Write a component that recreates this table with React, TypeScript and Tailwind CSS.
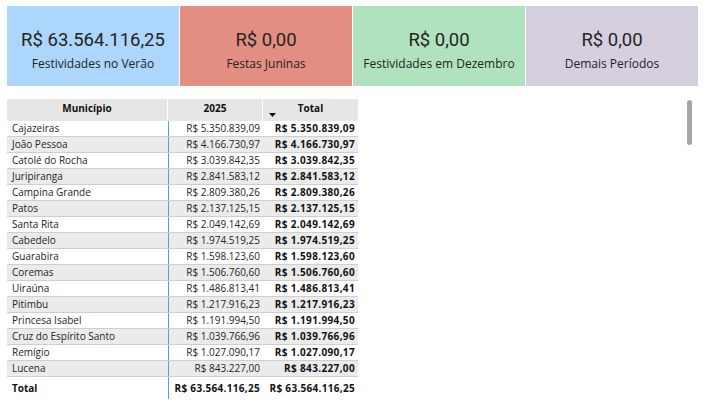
import React from "react";

const cards = [
  { value: "R$ 63.564.116,25", label: "Festividades no Verão", bg: "bg-[#acd6fc]" },
  { value: "R$ 0,00", label: "Festas Juninas", bg: "bg-[#e28e82]" },
  { value: "R$ 0,00", label: "Festividades em Dezembro", bg: "bg-[#b0e2bd]" },
  { value: "R$ 0,00", label: "Demais Períodos", bg: "bg-[#d6cfe0]" },
];

const rows: [string, string][] = [
  ["Cajazeiras", "R$ 5.350.839,09"],
  ["João Pessoa", "R$ 4.166.730,97"],
  ["Catolé do Rocha", "R$ 3.039.842,35"],
  ["Juripiranga", "R$ 2.841.583,12"],
  ["Campina Grande", "R$ 2.809.380,26"],
  ["Patos", "R$ 2.137.125,15"],
  ["Santa Rita", "R$ 2.049.142,69"],
  ["Cabedelo", "R$ 1.974.519,25"],
  ["Guarabira", "R$ 1.598.123,60"],
  ["Coremas", "R$ 1.506.760,60"],
  ["Uiraúna", "R$ 1.486.813,41"],
  ["Pitimbu", "R$ 1.217.916,23"],
  ["Princesa Isabel", "R$ 1.191.994,50"],
  ["Cruz do Espírito Santo", "R$ 1.039.766,96"],
  ["Remígio", "R$ 1.027.090,17"],
  ["Lucena", "R$ 843.227,00"],
];

export default function App() {
  return (
    <div className="w-[709px] h-[413px] bg-white relative overflow-hidden pl-[7px] pt-[6px] text-[#252423]">
      <div className="flex gap-px">
        {cards.map((c, i) => (
          <div
            key={i}
            className={`${c.bg} w-[172px] h-[80px] flex flex-col items-center pt-[23px]`}
          >
            <div className="font-['Roboto'] text-[18.5px] leading-[22px] text-[#252423]">
              {c.value}
            </div>
            <div className="font-['Open_Sans'] text-[12px] leading-[16px] text-[#252423] mt-[5px]">
              {c.label}
            </div>
          </div>
        ))}
      </div>

      <div className="mt-[13px] w-[351px] font-['Open_Sans'] text-[10px] text-[#252423]">
        <div className="grid grid-cols-[161px_95px_95px] h-[22px] bg-[#e6e6e6] font-bold text-[#111]">
          <div className="flex items-center justify-center border-r border-white pb-[3px]">Município</div>
          <div className="flex items-center justify-center border-r border-white pb-[3px]">2025</div>
          <div className="relative flex items-center justify-center pb-[3px]">
            Total
            <svg className="absolute left-[6px] top-[14px]" width="7" height="4" viewBox="0 0 7 4">
              <path d="M0 0 L7 0 L3.5 4 Z" fill="#111" />
            </svg>
          </div>
        </div>
        {rows.map(([name, val], i) => (
          <div
            key={name}
            className={`grid grid-cols-[161px_95px_95px] h-[16px] leading-[15px] border-b border-[#cfcfcf] ${
              i % 2 === 1 ? "bg-[#ebebeb]" : "bg-white"
            }`}
          >
            <div className="pl-[5px] whitespace-nowrap">{name}</div>
            <div className="border-l border-[#4aa0ee] text-right pr-[3px] whitespace-nowrap">{val}</div>
            <div className="text-right pr-[3px] font-bold text-[#111] tracking-[0.35px] whitespace-nowrap">{val}</div>
          </div>
        ))}
        <div className="grid grid-cols-[161px_95px_95px] h-[19px] leading-[22px] font-bold text-[#111]">
          <div className="pl-[5px]">Total</div>
          <div className="border-l border-[#4aa0ee] text-right pr-[3px] tracking-[0.3px] whitespace-nowrap">R$ 63.564.116,25</div>
          <div className="text-right pr-[3px] tracking-[0.3px] whitespace-nowrap">R$ 63.564.116,25</div>
        </div>
      </div>

      <div className="absolute left-[687px] top-[100px] w-[5px] h-[45px] rounded-full bg-[#a6a6a6]" />
    </div>
  );
}
